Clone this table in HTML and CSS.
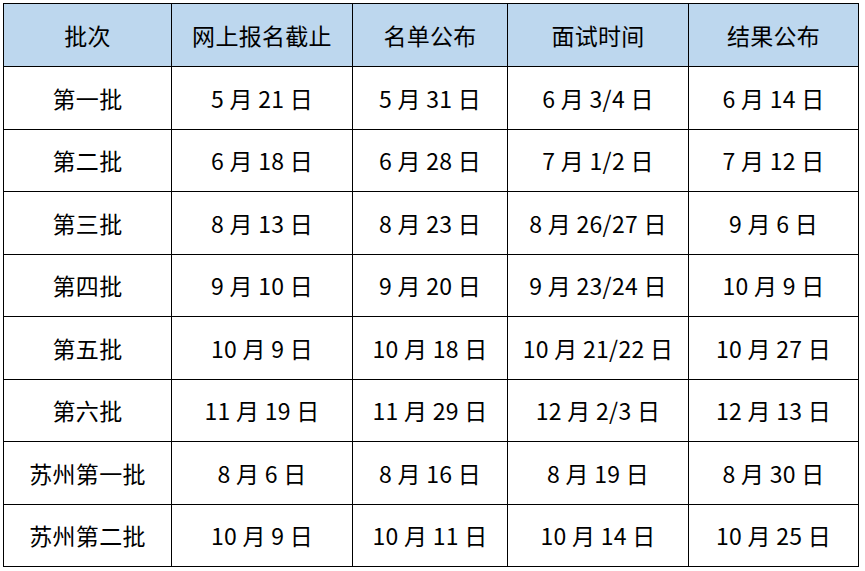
FILE: index.html
```html
<!DOCTYPE html>
<html lang="zh-CN">
<head>
<meta charset="utf-8">
<link rel="stylesheet" href="styles.css">
</head>
<body>
<table class="schedule">
  <colgroup>
    <col class="c1"><col class="c2"><col class="c3"><col class="c4"><col class="c5">
  </colgroup>
  <thead>
    <tr><th>批次</th><th>网上报名截止</th><th>名单公布</th><th>面试时间</th><th>结果公布</th></tr>
  </thead>
  <tbody>
    <tr><td>第一批</td><td>5 月 21 日</td><td>5 月 31 日</td><td>6 月 3/4 日</td><td>6 月 14 日</td></tr>
    <tr><td>第二批</td><td>6 月 18 日</td><td>6 月 28 日</td><td>7 月 1/2 日</td><td>7 月 12 日</td></tr>
    <tr><td>第三批</td><td>8 月 13 日</td><td>8 月 23 日</td><td>8 月 26/27 日</td><td>9 月 6 日</td></tr>
    <tr><td>第四批</td><td>9 月 10 日</td><td>9 月 20 日</td><td>9 月 23/24 日</td><td>10 月 9 日</td></tr>
    <tr><td>第五批</td><td>10 月 9 日</td><td>10 月 18 日</td><td>10 月 21/22 日</td><td>10 月 27 日</td></tr>
    <tr><td>第六批</td><td>11 月 19 日</td><td>11 月 29 日</td><td>12 月 2/3 日</td><td>12 月 13 日</td></tr>
    <tr><td>苏州第一批</td><td>8 月 6 日</td><td>8 月 16 日</td><td>8 月 19 日</td><td>8 月 30 日</td></tr>
    <tr><td>苏州第二批</td><td>10 月 9 日</td><td>10 月 11 日</td><td>10 月 14 日</td><td>10 月 25 日</td></tr>
  </tbody>
</table>
</body>
</html>
```
FILE: styles.css
```css
html, body {
  margin: 0;
  padding: 0;
  background: #ffffff;
}
body {
  padding: 3px 0 0 3px;
  font-family: "Noto Sans CJK SC", "Noto Sans", sans-serif;
  color: #000;
}
.schedule {
  border-collapse: collapse;
  table-layout: fixed;
  width: 855px;
}
.c1 { width: 168px; }
.c2 { width: 181px; }
.c3 { width: 155px; }
.c4 { width: 181px; }
.c5 { width: 170px; }
.schedule th,
.schedule td {
  border: 1.5px solid #000;
  text-align: center;
  vertical-align: middle;
  padding: 0;
  font-size: 23px;
  font-weight: normal;
  letter-spacing: 0.3px;
  white-space: nowrap;
}
.schedule th {
  background: #bdd7ee;
  height: 62px;
}
.schedule td {
  height: 61.5px;
}
```
